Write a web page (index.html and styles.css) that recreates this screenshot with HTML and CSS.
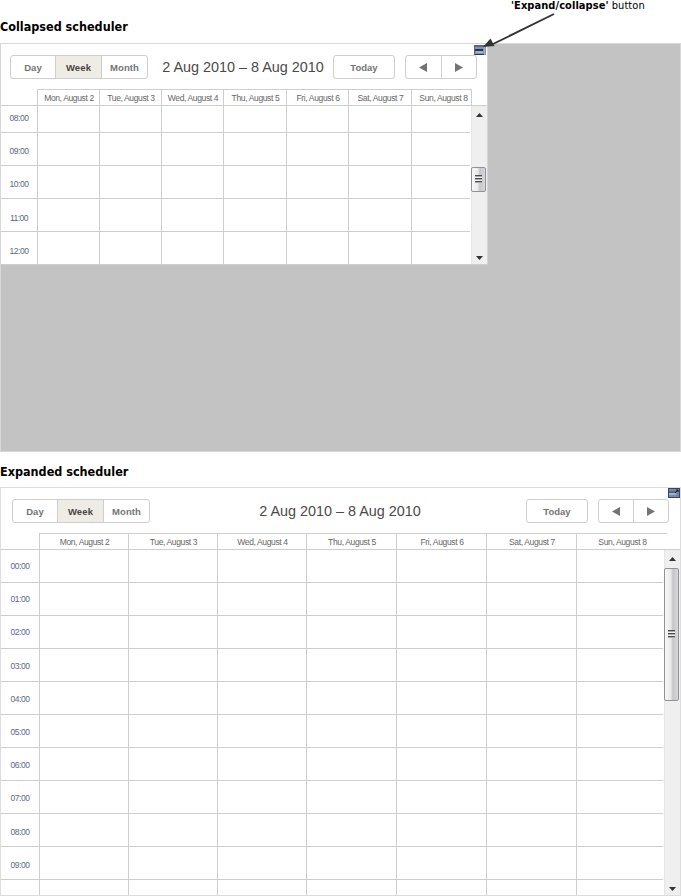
FILE: index.html
```html
<!DOCTYPE html>
<html lang="en">
<head>
<meta charset="utf-8">
<title>Scheduler: expand and collapse</title>
<link rel="stylesheet" href="styles.css">
</head>
<body>
<main class="page">
  <h2 class="heading heading-first">Collapsed scheduler</h2>
  <section class="stage">
    <div class="scheduler collapsed">
      <div class="toolbar">
        <div class="group views"><span class="btn">Day</span><span class="btn active">Week</span><span class="btn">Month</span></div>
        <div class="range"><span>2 Aug 2010 – 8 Aug 2010</span></div>
        <div class="group today"><span class="btn">Today</span></div>
        <div class="group nav"><span class="btn"><svg width="8" height="9"><path d="M8 0v9L0 4.5z"/></svg></span><span class="btn"><svg width="8" height="9"><path d="M0 0v9l8-4.5z"/></svg></span></div>
      </div>
      <div class="days">
        <span><b>Mon, August 2</b></span><span><b>Tue, August 3</b></span><span><b>Wed, August 4</b></span><span><b>Thu, August 5</b></span><span><b>Fri, August 6</b></span><span><b>Sat, August 7</b></span><span><b>Sun, August 8</b></span>
      </div>
      <div class="body">
        <div class="hours"><span>08:00</span><span>09:00</span><span>10:00</span><span>11:00</span><span>12:00</span></div>
        <div class="columns"><i></i><i></i><i></i><i></i><i></i><i></i><i></i></div>
        <div class="scrollbar">
          <svg class="arrow" width="7" height="4"><path d="M0 4h7L3.5 0z"/></svg>
          <div class="thumb"><span class="grip"></span></div>
          <svg class="arrow down" width="7" height="4"><path d="M0 0h7L3.5 4z"/></svg>
        </div>
      </div>
      <svg class="toggle" width="12" height="10" viewBox="0 0 12 10"><path fill="#8293b5" d="M0 0h12v10H0z"/><path fill="#5a6986" d="M0 0h11v2H0zM0 2h1v8H0z"/><path fill="#29344b" d="M1 4h8v2H1zM1 9h9v1H1z"/><path fill="#a2b1ce" d="M2 6h7v2H2zM10 2h1v8h-1z"/></svg>
    </div>
  </section>

  <h2 class="heading heading-second">Expanded scheduler</h2>
  <section class="scheduler expanded">
    <div class="toolbar">
      <div class="group views"><span class="btn">Day</span><span class="btn active">Week</span><span class="btn">Month</span></div>
      <div class="range"><span>2 Aug 2010 – 8 Aug 2010</span></div>
      <div class="group today"><span class="btn">Today</span></div>
      <div class="group nav"><span class="btn"><svg width="8" height="9"><path d="M8 0v9L0 4.5z"/></svg></span><span class="btn"><svg width="8" height="9"><path d="M0 0v9l8-4.5z"/></svg></span></div>
    </div>
    <div class="days">
      <span><b>Mon, August 2</b></span><span><b>Tue, August 3</b></span><span><b>Wed, August 4</b></span><span><b>Thu, August 5</b></span><span><b>Fri, August 6</b></span><span><b>Sat, August 7</b></span><span><b>Sun, August 8</b></span>
    </div>
    <div class="body">
      <div class="hours"><span>00:00</span><span>01:00</span><span>02:00</span><span>03:00</span><span>04:00</span><span>05:00</span><span>06:00</span><span>07:00</span><span>08:00</span><span>09:00</span></div>
      <div class="columns"><i></i><i></i><i></i><i></i><i></i><i></i><i></i></div>
      <div class="scrollbar">
        <svg class="arrow" width="7" height="4"><path d="M0 4h7L3.5 0z"/></svg>
        <div class="thumb"><span class="grip"></span></div>
        <svg class="arrow down" width="7" height="4"><path d="M0 0h7L3.5 4z"/></svg>
      </div>
    </div>
    <svg class="toggle" width="12" height="10" viewBox="0 0 12 10"><path fill="#7687a8" d="M0 0h12v10H0z"/><path fill="#39465f" d="M0 0h12v1H0zM0 1h1v9H0zM11 1h1v9h-1zM1 9h10v1H1z"/><path fill="#536584" d="M1 3h7v2H1z"/><path fill="#a2b1ce" d="M1 5h7v2H1z"/><path stroke="#141b29" d="M7 5l3-3M8 2h2v2" fill="none"/></svg>
  </section>

  <div class="callout"><strong>'Expand/collapse'</strong> button</div>
  <svg class="pointer" width="80" height="40" viewBox="0 0 80 40"><path d="M74 4L13 34" stroke="#333" stroke-width="1.8" fill="none"/><path d="M3 37l7.500-8.500 4 7.500z" fill="#333"/></svg>
</main>
</body>
</html>
```
FILE: styles.css
```css
* { box-sizing: border-box; }

body {
  margin: 0;
  background: #fff;
  font-family: "Liberation Sans", Arial, sans-serif;
}

.page {
  position: relative;
  width: 681px;
  height: 896px;
  overflow: hidden;
}

.heading {
  margin: 0;
  color: #000;
  font: bold 12.5px/16px "DejaVu Sans Condensed", "DejaVu Sans", sans-serif;
  white-space: nowrap;
}
.heading-first { padding-top: 19px; height: 43px; letter-spacing: 0; }
.heading-second { padding-top: 12px; height: 35px; letter-spacing: 0; }

.stage {
  height: 409px;
  border: 1px solid #d8d8d8;
  background: #c3c3c3;
}

.scheduler {
  position: relative;
  display: flex;
  flex-direction: column;
  background: #fff;
  overflow: hidden;
}
.collapsed {
  width: 487px;
  height: 221px;
  border-right: 1px solid #d4d4d4;
  border-bottom: 1px solid #cecece;
}
.expanded {
  height: 409px;
  border: 1px solid #dcdcdc;
}

.toolbar { display: flex; flex: none; height: 45px; }
.collapsed .toolbar { padding: 11px 10px 0 9px; }
.expanded .toolbar { padding: 11px 11px 0; }

.group {
  display: flex;
  flex: none;
  height: 24px;
  border: 1px solid #cecece;
  border-radius: 3px;
  overflow: hidden;
}
.btn {
  display: flex;
  flex: 1;
  align-items: center;
  justify-content: center;
  color: #747474;
  font-size: 9.5px;
  font-weight: bold;
  letter-spacing: 0.1px;
}
.btn + .btn { border-left: 1px solid #cecece; }
.btn svg { fill: #747474; }
.views { width: 138px; }
.views .btn { flex: none; width: 46px; }
.views .btn:first-child { width: 44px; }
.btn.active { background: #efece5; color: #494442; }
.today { width: 62px; margin-right: 10px; }
.today .btn { letter-spacing: 0; }
.nav { width: 72px; }
.expanded .nav { width: 71px; }

.range {
  display: flex;
  flex: 1;
  justify-content: center;
  color: #4a4a4a;
  font-size: 14.4px;
  line-height: 24px;
  white-space: nowrap;
}
.collapsed .range { padding-left: 5px; }
.expanded .range { padding-left: 4px; }

.days {
  display: grid;
  flex: none;
  height: 17px;
  border-bottom: 1px solid #cecece;
}
.days span {
  display: flex;
  align-items: center;
  justify-content: center;
  border-top: 1px solid #cecece;
  border-left: 1px solid #cecece;
  color: #666;
  font-size: 8.5px;
  white-space: nowrap;
}
.days b { font-weight: normal; letter-spacing: -0.36px; padding: 1px 0 0 1px; }
.collapsed .days {
  padding-left: 36px;
  grid-template-columns: 62px 62px 62px 63px 62px 63px 61px;
}
.collapsed .days span:last-child { border-right: 1px solid #cecece; }
.collapsed .days span:last-child b { padding-left: 4px; }
.expanded .days {
  padding-left: 38px;
  grid-template-columns: 89px 89px 89px 90px 90px 90px 91px;
}

.body {
  display: flex;
  flex: 1;
  min-height: 0;
}
.hours { flex: none; }
.hours span {
  display: block;
  height: 33.2px;
  color: #5c6788;
  font-size: 8.5px;
  line-height: 33px;
  letter-spacing: -0.5px;
  text-align: center;
}
.collapsed .hours { width: 36px; margin-top: -4px; }
.expanded .hours { width: 38px; }
.columns { display: grid; flex: none; margin-right: 1px; }
.columns i { border-left: 1px solid #cecece; }
.collapsed .columns { grid-template-columns: 62px 62px 62px 63px 62px 63px 59px; }
.expanded .columns { grid-template-columns: 89px 89px 89px 90px 90px 90px 87px; }
.collapsed .body {
  background: repeating-linear-gradient(#fff 0 32px, #cecece 32px 33px) 0 -6px / 469px 198px no-repeat;
}
.expanded .body {
  background: repeating-linear-gradient(#fff 0 32px, #cecece 32px 33px) 0 0 / 662px 100% no-repeat;
}

.scrollbar {
  display: flex;
  flex: 1;
  flex-direction: column;
  align-items: center;
  background: #efefef;
  border-left: 1px solid #e6e6e6;
}
.arrow { flex: none; margin-top: 7px; fill: #333; }
.arrow.down { margin-top: auto; margin-bottom: 4px; }
.thumb {
  display: flex;
  flex: none;
  align-items: center;
  justify-content: center;
  align-self: flex-start;
  width: 15px;
  margin-left: -1px;
  border: 1px solid #929296;
  border-radius: 2px;
  background: linear-gradient(90deg, #f7f7f7, #e9e9eb 45%, #c5c5ca 60%, #d8d8dc);
}
.collapsed .thumb { height: 25px; margin-top: 50px; }
.expanded .thumb { height: 133px; margin-top: 7px; }
.grip {
  width: 7px;
  height: 8px;
  margin-bottom: 2px;
  background: repeating-linear-gradient(#4a4a4a 0 1px, #aaa 1px 2px, #f2f2f2 2px 3px);
}

.toggle { position: absolute; }
.collapsed .toggle { top: 1px; left: 473px; }
.expanded .toggle { top: 0; right: 0; }

.callout {
  position: absolute;
  top: -2px;
  left: 511px;
  color: #000;
  font: 11px/16px "DejaVu Sans Condensed", "DejaVu Sans", sans-serif;
  letter-spacing: 0.06px;
  white-space: nowrap;
}
.pointer { position: absolute; top: 10px; left: 480px; }
```
